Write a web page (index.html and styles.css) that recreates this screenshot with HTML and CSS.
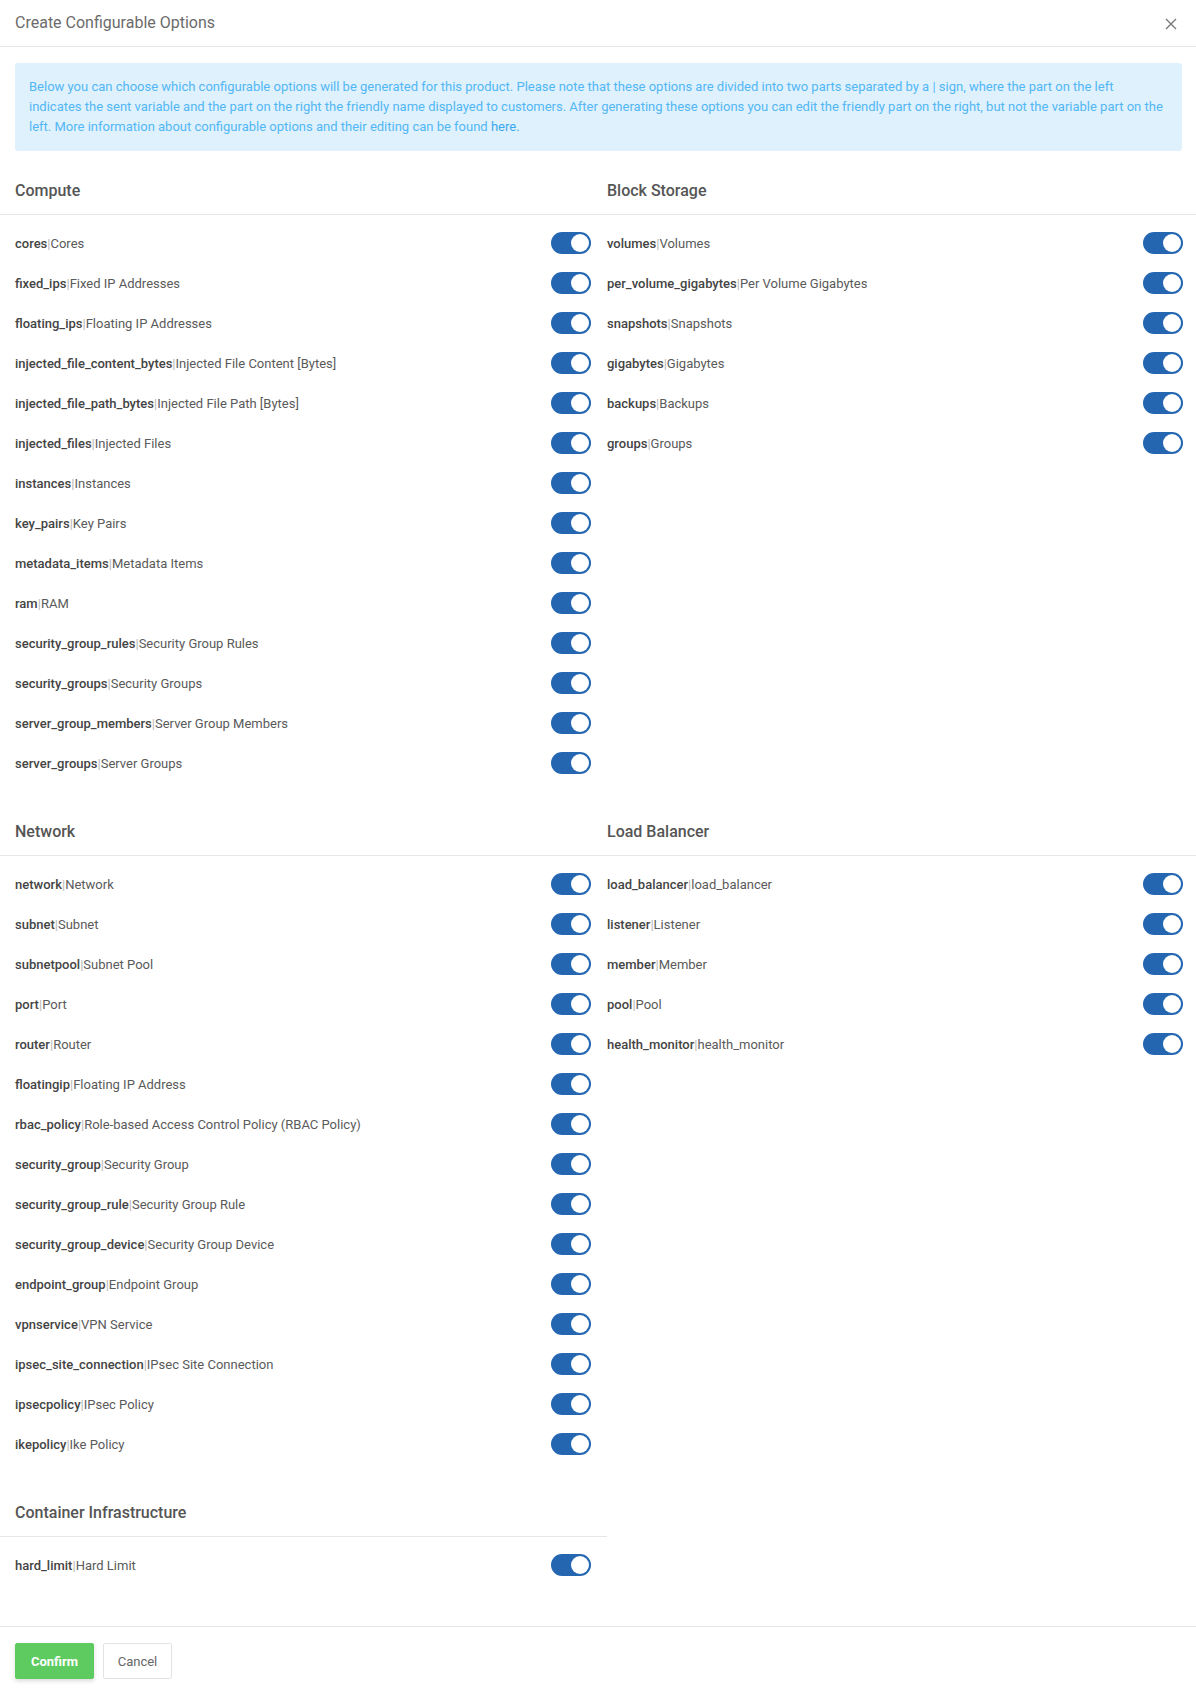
FILE: index.html
```html
<!DOCTYPE html>
<html lang="en">
<head>
<meta charset="utf-8">
<title>Create Configurable Options</title>
<link rel="stylesheet" href="styles.css">
</head>
<body>
<div class="modal">
  <div class="modal-header">
    <h1 class="modal-title">Create Configurable Options</h1>
    <button class="close" type="button" aria-label="Close">
      <svg width="12" height="12" viewBox="0 0 12 12"><path d="M1 1L11 11M11 1L1 11" stroke="#7a7a7a" stroke-width="1.4" fill="none"/></svg>
    </button>
  </div>
  <div class="modal-body">
    <div class="alert">Below you can choose which configurable options will be generated for this product. Please note that these options are divided into two parts separated by a | sign, where the part on the left indicates the sent variable and the part on the right the friendly name displayed to customers. After generating these options you can edit the friendly part on the right, but not the variable part on the left. More information about configurable options and their editing can be found <a href="#">here.</a></div>
    <div class="grid">
      <section class="group left">
        <h2 class="group-title">Compute</h2>
        <ul class="opts">
          <li class="opt"><span class="lbl"><b>cores</b><i>|</i>Cores</span><span class="toggle"></span></li>
          <li class="opt"><span class="lbl"><b>fixed_ips</b><i>|</i>Fixed IP Addresses</span><span class="toggle"></span></li>
          <li class="opt"><span class="lbl"><b>floating_ips</b><i>|</i>Floating IP Addresses</span><span class="toggle"></span></li>
          <li class="opt"><span class="lbl"><b>injected_file_content_bytes</b><i>|</i>Injected File Content [Bytes]</span><span class="toggle"></span></li>
          <li class="opt"><span class="lbl"><b>injected_file_path_bytes</b><i>|</i>Injected File Path [Bytes]</span><span class="toggle"></span></li>
          <li class="opt"><span class="lbl"><b>injected_files</b><i>|</i>Injected Files</span><span class="toggle"></span></li>
          <li class="opt"><span class="lbl"><b>instances</b><i>|</i>Instances</span><span class="toggle"></span></li>
          <li class="opt"><span class="lbl"><b>key_pairs</b><i>|</i>Key Pairs</span><span class="toggle"></span></li>
          <li class="opt"><span class="lbl"><b>metadata_items</b><i>|</i>Metadata Items</span><span class="toggle"></span></li>
          <li class="opt"><span class="lbl"><b>ram</b><i>|</i>RAM</span><span class="toggle"></span></li>
          <li class="opt"><span class="lbl"><b>security_group_rules</b><i>|</i>Security Group Rules</span><span class="toggle"></span></li>
          <li class="opt"><span class="lbl"><b>security_groups</b><i>|</i>Security Groups</span><span class="toggle"></span></li>
          <li class="opt"><span class="lbl"><b>server_group_members</b><i>|</i>Server Group Members</span><span class="toggle"></span></li>
          <li class="opt"><span class="lbl"><b>server_groups</b><i>|</i>Server Groups</span><span class="toggle"></span></li>
        </ul>
      </section>
      <section class="group right">
        <h2 class="group-title">Block Storage</h2>
        <ul class="opts">
          <li class="opt"><span class="lbl"><b>volumes</b><i>|</i>Volumes</span><span class="toggle"></span></li>
          <li class="opt"><span class="lbl"><b>per_volume_gigabytes</b><i>|</i>Per Volume Gigabytes</span><span class="toggle"></span></li>
          <li class="opt"><span class="lbl"><b>snapshots</b><i>|</i>Snapshots</span><span class="toggle"></span></li>
          <li class="opt"><span class="lbl"><b>gigabytes</b><i>|</i>Gigabytes</span><span class="toggle"></span></li>
          <li class="opt"><span class="lbl"><b>backups</b><i>|</i>Backups</span><span class="toggle"></span></li>
          <li class="opt"><span class="lbl"><b>groups</b><i>|</i>Groups</span><span class="toggle"></span></li>
        </ul>
      </section>
      <section class="group left">
        <h2 class="group-title">Network</h2>
        <ul class="opts">
          <li class="opt"><span class="lbl"><b>network</b><i>|</i>Network</span><span class="toggle"></span></li>
          <li class="opt"><span class="lbl"><b>subnet</b><i>|</i>Subnet</span><span class="toggle"></span></li>
          <li class="opt"><span class="lbl"><b>subnetpool</b><i>|</i>Subnet Pool</span><span class="toggle"></span></li>
          <li class="opt"><span class="lbl"><b>port</b><i>|</i>Port</span><span class="toggle"></span></li>
          <li class="opt"><span class="lbl"><b>router</b><i>|</i>Router</span><span class="toggle"></span></li>
          <li class="opt"><span class="lbl"><b>floatingip</b><i>|</i>Floating IP Address</span><span class="toggle"></span></li>
          <li class="opt"><span class="lbl"><b>rbac_policy</b><i>|</i>Role-based Access Control Policy (RBAC Policy)</span><span class="toggle"></span></li>
          <li class="opt"><span class="lbl"><b>security_group</b><i>|</i>Security Group</span><span class="toggle"></span></li>
          <li class="opt"><span class="lbl"><b>security_group_rule</b><i>|</i>Security Group Rule</span><span class="toggle"></span></li>
          <li class="opt"><span class="lbl"><b>security_group_device</b><i>|</i>Security Group Device</span><span class="toggle"></span></li>
          <li class="opt"><span class="lbl"><b>endpoint_group</b><i>|</i>Endpoint Group</span><span class="toggle"></span></li>
          <li class="opt"><span class="lbl"><b>vpnservice</b><i>|</i>VPN Service</span><span class="toggle"></span></li>
          <li class="opt"><span class="lbl"><b>ipsec_site_connection</b><i>|</i>IPsec Site Connection</span><span class="toggle"></span></li>
          <li class="opt"><span class="lbl"><b>ipsecpolicy</b><i>|</i>IPsec Policy</span><span class="toggle"></span></li>
          <li class="opt"><span class="lbl"><b>ikepolicy</b><i>|</i>Ike Policy</span><span class="toggle"></span></li>
        </ul>
      </section>
      <section class="group right">
        <h2 class="group-title">Load Balancer</h2>
        <ul class="opts">
          <li class="opt"><span class="lbl"><b>load_balancer</b><i>|</i>load_balancer</span><span class="toggle"></span></li>
          <li class="opt"><span class="lbl"><b>listener</b><i>|</i>Listener</span><span class="toggle"></span></li>
          <li class="opt"><span class="lbl"><b>member</b><i>|</i>Member</span><span class="toggle"></span></li>
          <li class="opt"><span class="lbl"><b>pool</b><i>|</i>Pool</span><span class="toggle"></span></li>
          <li class="opt"><span class="lbl"><b>health_monitor</b><i>|</i>health_monitor</span><span class="toggle"></span></li>
        </ul>
      </section>
      <section class="group left">
        <h2 class="group-title">Container Infrastructure</h2>
        <ul class="opts">
          <li class="opt"><span class="lbl"><b>hard_limit</b><i>|</i>Hard Limit</span><span class="toggle"></span></li>
        </ul>
      </section>
    </div>
  </div>
  <div class="modal-footer">
    <button class="btn btn-confirm" type="button">Confirm</button>
    <button class="btn btn-cancel" type="button">Cancel</button>
  </div>
</div>
</body>
</html>
```
FILE: styles.css
```css
* { box-sizing: border-box; }
html, body { margin: 0; padding: 0; background: #fff; }
body {
  font-family: Roboto, "Liberation Sans", Arial, sans-serif;
  font-size: 13px;
  color: #555;
}
.modal { width: 1196px; }
.modal-header {
  height: 47px;
  border-bottom: 1px solid #e6e6ea;
  display: flex;
  align-items: center;
  justify-content: space-between;
  padding: 0 19px 0 15px;
}
.modal-title {
  margin: 0;
  font-size: 16px;
  font-weight: 400;
  color: #6b6b6b;
  line-height: 44px;
}
.close {
  border: 0;
  background: none;
  padding: 0;
  width: 12px;
  height: 12px;
  display: flex;
  margin-top: 1px;
}
.modal-body { padding: 16px 0 18px; }
.alert {
  margin: 0 14px 0 15px;
  padding: 14px 14px;
  background: #dff1fc;
  color: #52b7f5;
  line-height: 20px;
  border-radius: 3px;
}
.alert a { color: #3aa8ee; text-decoration: none; }
.grid {
  display: grid;
  grid-template-columns: 607px 1fr;
  align-items: start;
  margin-top: 14px;
}
.group { padding-bottom: 23px; }
.group.left .group-title { padding-left: 15px; }
.group.left .opts { padding-left: 15px; padding-right: 16px; }
.group.right .opts { padding-right: 13px; }
.group-title {
  margin: 0;
  height: 50px;
  line-height: 51px;
  font-size: 16px;
  font-weight: 500;
  color: #555;
  border-bottom: 1px solid #e6e6ea;
}
.opts { list-style: none; margin: 0; padding: 8px 0 0; }
.opt {
  height: 40px;
  display: flex;
  align-items: center;
  justify-content: space-between;
}
.lbl { color: #5a5a5a; }
.lbl b { font-weight: 500; color: #444; }
.lbl i { font-style: normal; color: #b5b5b5; }
.toggle {
  position: relative;
  width: 40px;
  height: 22px;
  border-radius: 11px;
  background: #2566b0;
}
.toggle::after {
  content: "";
  position: absolute;
  top: 2px;
  right: 2px;
  width: 18px;
  height: 18px;
  border-radius: 50%;
  background: #fff;
}
.modal-footer {
  border-top: 1px solid #e6e6ea;
  padding: 16px 15px 16px;
  display: flex;
  gap: 9px;
}
.btn {
  height: 36px;
  font-family: Roboto, "Liberation Sans", Arial, sans-serif;
  font-size: 13px;
  border-radius: 2px;
  cursor: pointer;
}
.btn-confirm {
  width: 79px;
  background: #5ecb60;
  color: #fff;
  font-weight: 700;
  border: 1px solid #5ecb60;
  box-shadow: 0 2px 4px rgba(0,0,0,0.15);
}
.btn-cancel {
  width: 69px;
  background: #fff;
  color: #666;
  border: 1px solid #e3e3e3;
}
```
